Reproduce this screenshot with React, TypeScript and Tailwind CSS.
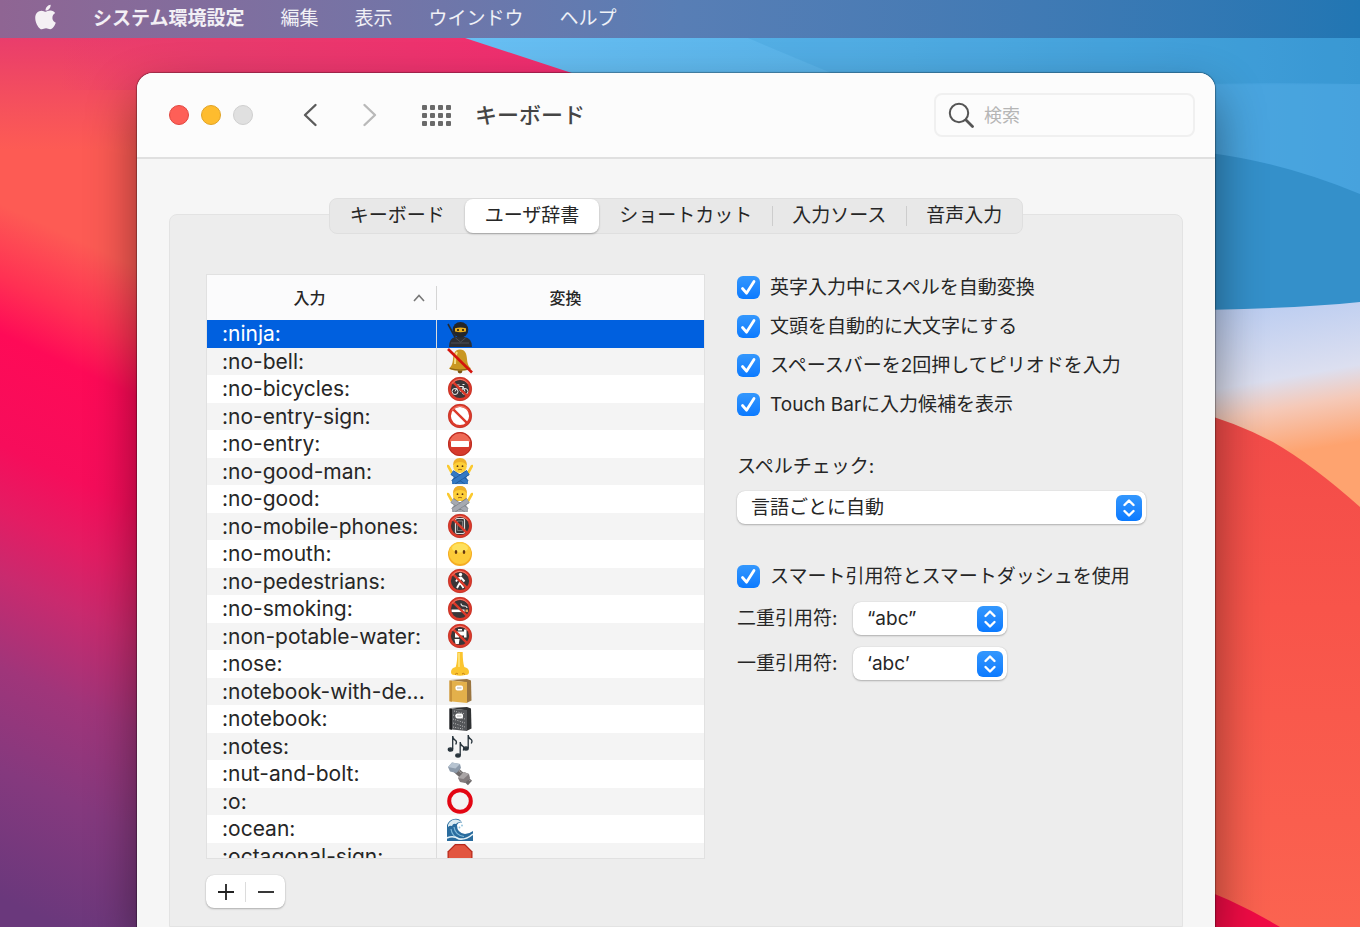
import { useState } from 'react';
import type { ReactNode } from 'react';
import { FaApple } from 'react-icons/fa';

interface GlyphProps {
  children: ReactNode;
}

function Glyph({ children }: GlyphProps) {
  return (
    <svg viewBox="0 0 26 26" className="block size-[26px] shrink-0" aria-hidden="true">
      {children}
    </svg>
  );
}

/** Red ring with a slash; the crossed-out thing is passed as children. */
function Prohibited({ children, fill = '#3a3638' }: { children?: ReactNode; fill?: string }) {
  return (
    <Glyph>
      <circle cx="13" cy="13" r="10.8" fill={fill} />
      {children}
      <path d="M5.8 5.8 20.2 20.2" stroke="#dc3a2b" strokeWidth="2.4" />
      <circle cx="13" cy="13" r="10.5" fill="none" stroke="#dc3a2b" strokeWidth="2.8" />
      <circle cx="13" cy="13" r="11.7" fill="none" stroke="#b32a20" strokeWidth="0.5" />
      <path d="M5 7.6a9.6 9.6 0 0 1 16 0" fill="none" stroke="#f58a78" strokeWidth="0.9" />
    </Glyph>
  );
}

function NoGood({ shirt, shade, longHair }: { shirt: string; shade: string; longHair?: boolean }) {
  return (
    <Glyph>
      {longHair && <path d="M6.500 7q0-7 6.500-7t6.500 7v8h-13z" fill="#e3a01f" />}
      <path d="M5 26q0-10 8-10t8 10z" fill={shirt} />
      <path d="M1 8l4.500 8M25 8l-4.500 8" stroke="#fbc92f" strokeWidth="2.6" strokeLinecap="round" />
      <circle cx="13" cy="8.200" r="6.800" fill="#fdcf38" />
      <path d="M6 7.500q0-7.500 7-7.500t7 7.500q-2.500-3.400-7-3.400T6 7.500z" fill="#eeb02a" />
      <circle cx="10.5" cy="8.2" r="0.900" fill="#5b3412" />
      <circle cx="15.5" cy="8.2" r="0.900" fill="#5b3412" />
      <path d="M5 14.500l15 10M21 14.500L6 24.500" stroke={shade} strokeWidth="5.4" />
      <path d="M5 14.500l15 10" stroke={shirt} strokeWidth="4.2" />
      <path d="M21 14.500L6 24.500" stroke={shade} strokeWidth="5.2" />
      <path d="M21 14.500L6 24.500" stroke={shirt} strokeWidth="4.2" />
      <path d="M11 11.800q2-1 4 0" stroke="#8b4b17" strokeWidth="0.8" fill="none" />
    </Glyph>
  );
}

function Book({ cover, edge, spine, speckled }: { cover: string; edge: string; spine: string; speckled?: boolean }) {
  return (
    <Glyph>
      <path d="M19 3.500l5-1 0.500 20-5 2.500z" fill={edge} />
      <path d="M3 2l17-1 4 1.500-3.500 2z" fill={edge} />
      <path d="M2.500 2.500L20 4v21L2.500 23.200z" fill={cover} />
      <path d="M2.500 2.500l2.500.2v21l-2.500-.4z" fill={spine} />
      {speckled && (
        <path
          d="M7 5l11 3M6 9l12 4M6 13l12 4M6 17l12 4M6 21l10 2"
          stroke="#d5d5d5"
          strokeWidth="1"
          strokeDasharray="0.8 1.6"
        />
      )}
      <rect x="8.5" y="7.5" width="7.5" height="5" rx="1.8" fill="#fff" />
      <path d="M10 10h4.500" stroke="#888" strokeWidth="0.7" />
    </Glyph>
  );
}

interface Entry {
  shortcut: string;
  glyph: ReactNode;
}

const entries: Entry[] = [
  {
    shortcut: ':ninja:',
    glyph: (
      <Glyph>
        <path d="M1 3l8 15" stroke="#26282c" strokeWidth="1.6" />
        <path d="M2 26q0-9 6.500-10h9Q25 17 25 26z" fill="#2c2e33" />
        <circle cx="13.5" cy="8.8" r="7.8" fill="#24262a" />
        <path d="M8 7.200q5.500-1.200 11 0v3.400q-5.500 1.400-11 0z" fill="#e9b020" />
        <circle cx="11" cy="9" r="1.100" fill="#2b1a06" />
        <circle cx="16" cy="9" r="1.100" fill="#2b1a06" />
        <path d="M8.500 17l5 4 5-4M4 22h18" stroke="#555960" strokeWidth="0.8" fill="none" />
      </Glyph>
    ),
  },
  {
    shortcut: ':no-bell:',
    glyph: (
      <Glyph>
        <circle cx="13" cy="23" r="2.4" fill="#7a5410" />
        <path
          d="M13 1.500c5.500 0 6.500 4.500 7 9.500.4 5 1.500 7 4 9.500-4 3-18 3-22 0 2.500-2.500 3.600-4.500 4-9.500.5-5 1.500-9.500 7-9.500z"
          fill="#c99722"
        />
        <path d="M10 4q-2 4-2 12" stroke="#f5df86" strokeWidth="2" fill="none" />
        <path d="M3 20.500q10 3 20 0" stroke="#8c6414" strokeWidth="1.2" fill="none" />
        <path d="M1 1l24 23.500" stroke="#d4150d" strokeWidth="2.6" />
      </Glyph>
    ),
  },
  {
    shortcut: ':no-bicycles:',
    glyph: (
      <Prohibited>
        <g fill="none" stroke="#eee" strokeWidth="1">
          <circle cx="8" cy="15.5" r="3" />
          <circle cx="18" cy="15.5" r="3" />
          <path d="M8 15.500l3-5h5l2 5M11 10.500l2.500 5 3-5M10 9h2.500M15.500 8.500h2" />
        </g>
      </Prohibited>
    ),
  },
  { shortcut: ':no-entry-sign:', glyph: <Prohibited fill="#fff" /> },
  {
    shortcut: ':no-entry:',
    glyph: (
      <Glyph>
        <circle cx="13" cy="13" r="12" fill="#d63a2c" />
        <path d="M2.500 11a10.700 10.700 0 0 1 21 0z" fill="#ee6a56" />
        <circle cx="13" cy="13" r="11.5" fill="none" stroke="#b92d22" />
        <rect x="4" y="10" width="18" height="6" rx="0.8" fill="#fff" />
      </Glyph>
    ),
  },
  { shortcut: ':no-good-man:', glyph: <NoGood shirt="#3479c4" shade="#1f5593" /> },
  { shortcut: ':no-good:', glyph: <NoGood shirt="#a5a9b0" shade="#7c8087" longHair /> },
  {
    shortcut: ':no-mobile-phones:',
    glyph: (
      <Prohibited>
        <rect x="8.5" y="5.5" width="9" height="15" rx="1.5" fill="none" stroke="#ddd" strokeWidth="1.2" />
        <path d="M10.500 8h5v9.500h-5z" fill="none" stroke="#999" strokeWidth="0.7" />
      </Prohibited>
    ),
  },
  {
    shortcut: ':no-mouth:',
    glyph: (
      <Glyph>
        <circle cx="13" cy="13" r="12" fill="#f5ac22" />
        <circle cx="13" cy="12" r="11" fill="#fdcb38" />
        <ellipse cx="13" cy="7" rx="8" ry="4.5" fill="#fee05c" />
        <ellipse cx="9" cy="11" rx="1.3" ry="1.9" fill="#65380f" />
        <ellipse cx="17" cy="11" rx="1.3" ry="1.9" fill="#65380f" />
      </Glyph>
    ),
  },
  {
    shortcut: ':no-pedestrians:',
    glyph: (
      <Prohibited>
        <circle cx="13.5" cy="6.5" r="1.7" fill="#fff" />
        <path
          d="M13 9.500v5l3.500 5.500M13 14.500l-3 5.500M9 13.500l2-3 3-1 3.500 4"
          fill="none"
          stroke="#fff"
          strokeWidth="1.9"
          strokeLinejoin="round"
        />
      </Prohibited>
    ),
  },
  {
    shortcut: ':no-smoking:',
    glyph: (
      <Prohibited>
        <path d="M4.500 13.500h13v2.600h-13z" fill="#fff" />
        <path d="M18.500 13.500h2.500v2.600h-2.500z" fill="#e8a25c" />
        <path d="M20 12q0-2-3-2t-3-2.500" stroke="#ddd" fill="none" strokeWidth="1.2" />
      </Prohibited>
    ),
  },
  {
    shortcut: ':non-potable-water:',
    glyph: (
      <Prohibited>
        <path d="M8 8.500h9v-2h2.500v8H17v-2h-5v2H8z" fill="#fff" />
        <path d="M11 6h4v1.500h-4z" fill="#fff" />
        <path d="M7.500 16h5l-.7 5H8.500z" fill="#fff" />
      </Prohibited>
    ),
  },
  {
    shortcut: ':nose:',
    glyph: (
      <Glyph>
        <path
          d="M10.300 1h5.400q0 10 1.600 15 4.700 1 4.700 5 0 3.500-4 3-5 1.500-10 0-4 .5-4-3 0-4 4.700-5 1.600-5 1.600-15z"
          fill="#fbc52f"
        />
        <path d="M12 2v14" stroke="#fee277" strokeWidth="1.8" />
        <path d="M8 23.500q1.500-2 3-.5M18 23.500q-1.500-2-3-.5" stroke="#c07a13" fill="none" />
      </Glyph>
    ),
  },
  { shortcut: ':notebook-with-de...', glyph: <Book cover="#e3b04b" edge="#9a7540" spine="#c8923a" /> },
  { shortcut: ':notebook:', glyph: <Book cover="#55575a" edge="#303234" spine="#1e1f21" speckled /> },
  {
    shortcut: ':notes:',
    glyph: (
      <Glyph>
        <g fill="#26323a" stroke="#26323a" strokeWidth="1.3">
          <ellipse cx="3.5" cy="16.5" rx="2.2" ry="1.6" />
          <path d="M5.700 16V3q0 3 3 4.500 1.500 1.500 0 4" fill="none" />
          <ellipse cx="11" cy="22.5" rx="2.2" ry="1.6" />
          <path d="M13.200 22V9q0 3 3 4.500 1.500 1.500 0 4" fill="none" />
          <ellipse cx="19" cy="15.5" rx="2.2" ry="1.6" />
          <path d="M21.200 15V2q0 3 3 4.500 1.500 1.500 0 4" fill="none" />
        </g>
      </Glyph>
    ),
  },
  {
    shortcut: ':nut-and-bolt:',
    glyph: (
      <Glyph>
        <path d="M8 8l15 14" stroke="#6e6a6b" strokeWidth="6" />
        <path d="M9 7l15 13" stroke="#aaa4a4" strokeWidth="1.6" strokeDasharray="1 1" />
        <path d="M1 6l4-4.500L13 3l1 4-4.500 5L3 10.500z" fill="#8d9bab" />
        <path d="M1 6l4-4.500L13 3 8.500 7.500z" fill="#b7c4d1" />
        <path d="M11 17l6-6 5 2 1 4-5 5-5-1z" fill="#837c7e" />
        <path d="M11 17l6-6 5 2-5.500 5z" fill="#aaa5a6" />
      </Glyph>
    ),
  },
  {
    shortcut: ':o:',
    glyph: (
      <Glyph>
        <circle cx="13" cy="13" r="10.8" fill="none" stroke="#e30613" strokeWidth="4" />
      </Glyph>
    ),
  },
  {
    shortcut: ':ocean:',
    glyph: (
      <Glyph>
        <path d="M0 25V9q2-5 7-6 6-1 8 4-4-1-5 2 0 8 8 9 4 0 8-3v10z" fill="#2a6c9e" />
        <path d="M1 9q2-5 7-5.500 5 0 7 3.500-4-2-6 1-3-1-4 2-2-1-4 1z" fill="#dcecf3" />
        <path d="M4 13q1 8 9 10M7 11q1 8 10 9.500" stroke="#7fb9d8" strokeWidth="1.2" fill="none" />
        <path d="M0 22q6-3 12 1 7 1 14-5" stroke="#e5f2f7" strokeWidth="1.6" fill="none" />
        <circle cx="15" cy="9.5" r="0.9" fill="#8fc1dc" />
        <circle cx="12.5" cy="11.5" r="0.9" fill="#8fc1dc" />
      </Glyph>
    ),
  },
  {
    shortcut: ':octagonal-sign:',
    glyph: (
      <Glyph>
        <path d="M8 1h10l7.500 7.500v10L18 25H8L.5 18.500v-10z" fill="#b7281b" />
        <path d="M8.500 2.200h9L24.300 9v9l-6.800 6h-9l-6.800-6V9z" fill="#e2553f" />
      </Glyph>
    ),
  },
];

const menus = ['編集', '表示', 'ウインドウ', 'ヘルプ'];
const tabs = ['キーボード', 'ユーザ辞書', 'ショートカット', '入力ソース', '音声入力'];
const typingOptions = [
  '英字入力中にスペルを自動変換',
  '文頭を自動的に大文字にする',
  'スペースバーを2回押してピリオドを入力',
  'Touch Barに入力候補を表示',
];

function Wallpaper() {
  return (
    <svg
      viewBox="0 0 1360 927"
      preserveAspectRatio="none"
      className="absolute inset-0 -z-10 size-full"
      aria-hidden="true"
    >
      <defs>
        <linearGradient id="dusk" gradientUnits="userSpaceOnUse" x1="60" y1="0" x2="-293" y2="763">
          <stop offset="0.25" stopColor="#fd5b54" />
          <stop offset="0.33" stopColor="#ff3053" />
          <stop offset="0.39" stopColor="#fe0a57" />
          <stop offset="0.51" stopColor="#f60d5b" />
          <stop offset="0.58" stopColor="#e41c63" />
          <stop offset="0.65" stopColor="#c92a6e" />
          <stop offset="0.75" stopColor="#a0357a" />
          <stop offset="0.86" stopColor="#85397e" />
          <stop offset="1" stopColor="#6a387c" />
        </linearGradient>
        <linearGradient id="rose" x1="0" y1="0" x2="0" y2="1">
          <stop offset="0.2" stopColor="#e83b6e" />
          <stop offset="0.4" stopColor="#e93d6b" stopOpacity="0.8" />
          <stop offset="1" stopColor="#ea4468" stopOpacity="0" />
        </linearGradient>
        <linearGradient id="magenta" x1="0" x2="1">
          <stop offset="0" stopColor="#e83b6c" stopOpacity="0" />
          <stop offset="0.3" stopColor="#e83b6c" />
          <stop offset="1" stopColor="#f22b70" />
        </linearGradient>
        <linearGradient id="sky" gradientUnits="userSpaceOnUse" x1="465" y1="0" x2="1360" y2="0">
          <stop offset="0" stopColor="#68bff3" />
          <stop offset="0.5" stopColor="#56b0e6" />
          <stop offset="1" stopColor="#3c9ad5" />
        </linearGradient>
        <linearGradient id="haze" x1="0" y1="0" x2="0.15" y2="1">
          <stop offset="0" stopColor="#afc6f1" />
          <stop offset="0.35" stopColor="#dcdff0" />
          <stop offset="0.45" stopColor="#f5c9b8" />
          <stop offset="0.6" stopColor="#fea36f" />
        </linearGradient>
        <linearGradient id="coral" x1="0" y1="0" x2="0" y2="1">
          <stop offset="0" stopColor="#f24a49" />
          <stop offset="0.4" stopColor="#f8544a" />
          <stop offset="1" stopColor="#fb6350" />
        </linearGradient>
      </defs>
      <rect width="700" height="927" fill="url(#dusk)" />
      <rect width="700" height="150" fill="url(#rose)" />
      <rect x="60" width="540" height="90" fill="url(#magenta)" />
      <path d="M350 0 465 38 590 79 700 140V400h660V0z" fill="url(#sky)" />
      <path d="M660 0 748 38 860 85H1360V0z" fill="#2f8fce" fillOpacity="0.18" />
      <path d="M1100 86q130-4 260-2v120h-260z" fill="#4fa8e2" fillOpacity="0.6" />
      <path d="M1100 150q130-10 260 44v140h-260z" fill="#3490ca" />
      <path d="M1100 310q160 2 260-8v300h-260z" fill="url(#haze)" />
      <path d="M1100 396q100 7 173 46 40 23 87 65v420h-260z" fill="url(#coral)" />
      <path d="M1100 865q90 8 180 62h-180z" fill="#f00b45" />
    </svg>
  );
}

function Checkbox({ label }: { label: string }) {
  return (
    <label className="flex h-[23px] items-center gap-[10px] whitespace-nowrap">
      <span className="relative size-[23px] shrink-0">
        <input
          type="checkbox"
          defaultChecked
          className="peer block size-[23px] appearance-none rounded-md border border-gray-300 bg-white checked:border-0 checked:bg-linear-to-b checked:from-[#3397fd] checked:to-[#0a7aff]"
        />
        <svg
          viewBox="0 0 23 23"
          className="pointer-events-none absolute inset-0 hidden size-full peer-checked:block"
          aria-hidden="true"
        >
          <path
            d="M5.500 12.500l4 4.700 7.500-11.700"
            fill="none"
            stroke="#fff"
            strokeWidth="2.8"
            strokeLinecap="round"
            strokeLinejoin="round"
          />
        </svg>
      </span>
      {label}
    </label>
  );
}

function PopUp({ id, value }: { id: string; value: string }) {
  return (
    <div className="relative h-[33px] flex-1">
      <select
        id={id}
        className="block h-full w-full appearance-none rounded-lg bg-white pr-10 pl-[14px] shadow-[0_1px_2px_rgba(0,0,0,0.25),0_0_1px_rgba(0,0,0,0.2)]"
      >
        <option>{value}</option>
      </select>
      <span className="pointer-events-none absolute top-[4px] right-[4px] grid size-[26px] place-items-center rounded-md bg-linear-to-b from-[#3397fd] to-[#0a7aff]">
        <svg viewBox="0 0 26 26" className="size-[26px]" aria-hidden="true">
          <path
            d="M8.500 10 13 5.500l4.500 4.500M8.500 16l4.500 4.500 4.500-4.500"
            fill="none"
            stroke="#fff"
            strokeWidth="2.4"
            strokeLinecap="round"
            strokeLinejoin="round"
          />
        </svg>
      </span>
    </div>
  );
}

function MenuBar() {
  return (
    <nav className="flex h-[38px] shrink-0 items-center gap-[36px] bg-linear-to-r from-[#8f6593] via-[#587eb5] to-[#2176b3] pl-[34px] text-white/90 [text-shadow:0_1px_3px_rgba(0,0,0,0.3)]">
      <button type="button" aria-label="Apple" className="-mt-1">
        <FaApple className="h-[28px] w-[23px]" />
      </button>
      <button type="button" className="font-bold">
        システム環境設定
      </button>
      {menus.map((menu) => (
        <button key={menu} type="button">
          {menu}
        </button>
      ))}
    </nav>
  );
}

function Toolbar() {
  return (
    <header className="flex h-[86px] shrink-0 items-center border-b-2 border-[#e0e0e0] bg-[#fcfcfc] pr-[20px] pl-8">
      <div className="flex gap-3">
        <button type="button" aria-label="閉じる" className="size-5 rounded-full border border-[#e2463f] bg-[#fe5f57]" />
        <button type="button" aria-label="しまう" className="size-5 rounded-full border border-[#e1a325] bg-[#febc2e]" />
        <button type="button" aria-label="拡大" disabled className="size-5 rounded-full border border-[#cfcfcf] bg-[#e0e0e0]" />
      </div>
      <div className="ml-[49px] flex gap-[44px]">
        <button type="button" aria-label="戻る" className="text-[#5c5c5c]">
          <svg viewBox="0 0 16 26" className="h-[26px] w-4" fill="none" stroke="currentColor" strokeWidth="2.4" strokeLinecap="round" strokeLinejoin="round">
            <path d="M13.500 3 3 13l10.500 10" />
          </svg>
        </button>
        <button type="button" aria-label="進む" disabled className="text-[#b9b9b9]">
          <svg viewBox="0 0 16 26" className="h-[26px] w-4" fill="none" stroke="currentColor" strokeWidth="2.4" strokeLinecap="round" strokeLinejoin="round">
            <path d="M2.500 3 13 13 2.500 23" />
          </svg>
        </button>
      </div>
      <button type="button" aria-label="すべてを表示" className="ml-[44px] grid grid-cols-4 gap-[3px]">
        {Array.from({ length: 12 }, (_, i) => (
          <span key={i} className="size-[5px] rounded-[1px] bg-[#6a6a6a]" />
        ))}
      </button>
      <h1 className="ml-6 text-[22px] font-medium text-[#454545]">キーボード</h1>
      <label className="ml-auto flex h-[44px] w-[261px] items-center gap-[10px] rounded-lg border-2 border-[#f0f0f0] pl-3">
        <svg viewBox="0 0 26 26" className="size-[26px] shrink-0" fill="none" stroke="#555" strokeLinecap="round" aria-hidden="true">
          <circle cx="11" cy="11" r="9.2" strokeWidth="2" />
          <path d="M18 18l6.500 6.500" strokeWidth="2.8" />
        </svg>
        <input
          type="search"
          aria-label="検索"
          placeholder="検索"
          className="min-w-0 flex-1 bg-transparent text-[18px] outline-none placeholder:text-[#b5b5b5]"
        />
      </label>
    </header>
  );
}

function DictionaryTable() {
  const [selected, setSelected] = useState(':ninja:');

  return (
    <div className="h-[585px] overflow-hidden border border-[#e1e1e1] bg-white">
      <table className="h-[595px] w-full table-fixed border-separate border-spacing-0 text-left">
        <thead>
          <tr className="h-[45px] bg-[#fbfbfc] text-[16px]">
            <th className="w-[230px] p-0 font-medium">
              <div className="flex items-center border-r border-[#d5d5d5] pr-[10px]">
                <span className="flex-1 pl-[-4px] text-center">入力</span>
                <svg viewBox="0 0 14 10" className="h-[10px] w-[14px]" fill="none" stroke="#777" strokeWidth="1.6" aria-hidden="true">
                  <path d="M2 8l5-5.500L12 8" />
                </svg>
              </div>
            </th>
            <th className="p-0 pr-[10px] text-center font-medium">変換</th>
          </tr>
        </thead>
        <tbody>
          {entries.map(({ shortcut, glyph }) => (
            <tr
              key={shortcut}
              aria-selected={shortcut === selected}
              onClick={() => setSelected(shortcut)}
              className="leading-[27px] even:bg-[#f4f4f4] aria-selected:bg-[#0060df] aria-selected:text-white"
            >
              <td className="border-r border-[#dcdcdc] p-0 pl-[15px] text-[21px] whitespace-nowrap">{shortcut}</td>
              <td className="p-0 pl-[10px]">{glyph}</td>
            </tr>
          ))}
        </tbody>
      </table>
    </div>
  );
}

export default function App() {
  const [activeTab, setActiveTab] = useState('ユーザ辞書');

  return (
    <div className="relative isolate flex h-screen flex-col overflow-hidden font-['Inter','Noto_Sans_CJK_JP',sans-serif] text-[19px] text-[#262626]">
      <Wallpaper />
      <MenuBar />
      <main className="mt-[35px] mr-[145px] ml-[137px] flex min-h-0 flex-1 flex-col overflow-hidden rounded-t-2xl bg-[#f6f6f6] shadow-[0_0_1px_1px_rgba(0,0,0,0.3),0_24px_50px_rgba(0,0,0,0.45)]">
        <Toolbar />
        <div className="flex min-h-0 flex-1 flex-col px-8 pt-[39px]">
          <div role="tablist" className="relative z-10 flex h-[36px] shrink-0 self-center rounded-lg border border-[#dfdfdf] bg-[#e8e8e8]">
            {tabs.map((tab, i) => (
              <button
                key={tab}
                type="button"
                role="tab"
                aria-selected={tab === activeTab}
                onClick={() => setActiveTab(tab)}
                className="flex items-center whitespace-nowrap aria-selected:rounded-lg aria-selected:bg-white aria-selected:shadow-[0_1px_2px_rgba(0,0,0,0.3)]"
              >
                {i > 0 && tab !== activeTab && tabs[i - 1] !== activeTab && (
                  <span className="-mr-px h-5 w-px bg-[#cdcdcd]" />
                )}
                <span className="px-5">{tab}</span>
              </button>
            ))}
          </div>
          <div className="-mt-5 flex flex-1 gap-8 rounded-t-lg border border-[#e3e3e3] bg-[#ededed] px-[36px] pt-[59px]">
            <section className="min-w-0 flex-1">
              <DictionaryTable />
              <div className="mt-4 inline-flex h-[33px] items-center rounded-lg bg-white shadow-[0_1px_2px_rgba(0,0,0,0.25),0_0_1px_rgba(0,0,0,0.2)]">
                <button type="button" aria-label="追加" className="grid w-[39px] place-items-center">
                  <svg viewBox="0 0 18 18" className="size-[18px]" stroke="#222" strokeWidth="1.8">
                    <path d="M1 9h16M9 1v16" />
                  </svg>
                </button>
                <span className="h-5 w-px bg-[#dcdcdc]" />
                <button type="button" aria-label="削除" className="grid w-[39px] place-items-center">
                  <svg viewBox="0 0 18 18" className="size-[18px]" stroke="#222" strokeWidth="1.8">
                    <path d="M1 9h16" />
                  </svg>
                </button>
              </div>
            </section>
            <section className="w-[409px] shrink-0 pt-[2px] leading-[23px]">
              <div className="flex flex-col gap-4">
                {typingOptions.map((option) => (
                  <Checkbox key={option} label={option} />
                ))}
              </div>
              <label htmlFor="spelling" className="mt-[39px] block">
                スペルチェック:
              </label>
              <div className="mt-[13px] flex">
                <PopUp id="spelling" value="言語ごとに自動" />
              </div>
              <div className="mt-[41px]">
                <Checkbox label="スマート引用符とスマートダッシュを使用" />
              </div>
              <div className="mt-[14px] flex w-[270px] items-center">
                <label htmlFor="double-quotes" className="w-[116px]">
                  二重引用符:
                </label>
                <PopUp id="double-quotes" value="“abc”" />
              </div>
              <div className="mt-3 flex w-[270px] items-center">
                <label htmlFor="single-quotes" className="w-[116px]">
                  一重引用符:
                </label>
                <PopUp id="single-quotes" value="‘abc’" />
              </div>
            </section>
          </div>
        </div>
      </main>
    </div>
  );
}
